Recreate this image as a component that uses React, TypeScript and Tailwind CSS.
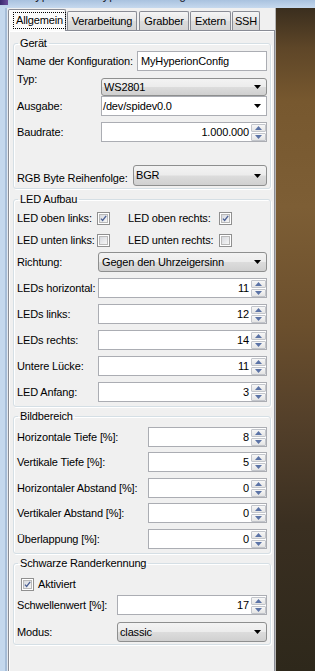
import React from "react";

function ComboArrow() {
  return (
    <svg width="7" height="4" viewBox="0 0 7 4" className="shrink-0">
      <polygon points="0,0 7,0 3.5,4" fill="#000" />
    </svg>
  );
}

function ReadCombo({ text, className }: { text: string; className: string }) {
  return (
    <div
      className={
        "flex items-center justify-between border border-[#8e8f8f] rounded-[3px] pr-[5px] bg-[linear-gradient(to_bottom,#f3f3f3_0%,#ececec_48%,#dcdcdc_52%,#d0d0d0_100%)] " +
        className
      }
    >
      <span className="whitespace-nowrap">{text}</span>
      <ComboArrow />
    </div>
  );
}

function EditCombo({ text, className }: { text: string; className: string }) {
  return (
    <div className={"flex items-center justify-between border border-[#abadb3] bg-white pr-[5px] " + className}>
      <span className="whitespace-nowrap">{text}</span>
      <ComboArrow />
    </div>
  );
}

function SpinBtn({ up }: { up: boolean }) {
  return (
    <div className="h-[8px] border border-[#c2c5cb] rounded-[1px] bg-[linear-gradient(to_bottom,#f7f7f7,#e4e4e4)] flex items-center justify-center">
      <svg width="7" height="4" viewBox="0 0 7 4">
        {up ? (
          <polygon points="3.5,0 7,4 0,4" fill="#5b73a6" />
        ) : (
          <polygon points="0,0 7,0 3.5,4" fill="#5b73a6" />
        )}
      </svg>
    </div>
  );
}

function Spin({ value, className }: { value: string; className: string }) {
  return (
    <div className={"flex h-[20px] border border-[#abadb3] bg-white " + className}>
      <span className="flex-1 flex items-center justify-end pr-[2px]">{value}</span>
      <div className="w-[15px] pt-[1px] flex flex-col gap-[1px]">
        <SpinBtn up={true} />
        <SpinBtn up={false} />
      </div>
    </div>
  );
}

function Check({ checked }: { checked: boolean }) {
  return (
    <div className="w-[13px] h-[13px] shrink-0 border border-[#8f8f8f] bg-white p-[1px]">
      <div className="w-full h-full border border-[#b9b9b9] bg-[linear-gradient(135deg,#d7d9de,#f6f6f6)] flex items-center justify-center">
        {checked ? (
          <svg width="9" height="9" viewBox="0 0 9 9">
            <path d="M1.2 4.6 L3.4 7 L7.9 1.2" stroke="#4a5f93" strokeWidth="1.7" fill="none" />
          </svg>
        ) : null}
      </div>
    </div>
  );
}

function Group({ title, className, children }: { title: string; className: string; children: React.ReactNode }) {
  return (
    <fieldset
      className={
        "ml-[4px] mr-[3px] border border-[#d5dfe5] rounded-[3px] px-[3px] shadow-[inset_1px_1px_0_#ffffff,1px_1px_0_#ffffff] " +
        className
      }
    >
      <legend className="ml-[1px] px-[2px] leading-[13px] whitespace-nowrap">{title}</legend>
      {children}
    </fieldset>
  );
}

function Tab({ label, className }: { label: string; className: string }) {
  return (
    <div
      className={
        "h-[19px] flex items-center justify-center border border-b-0 border-[#898c95] rounded-t-[2px] bg-[linear-gradient(to_bottom,#f5f5f5,#e6e6e6_50%,#dcdcdc_51%,#d4d4d4)] whitespace-nowrap " +
        className
      }
    >
      {label}
    </div>
  );
}

export default function App() {
  return (
    <div className="w-[315px] h-[671px] overflow-hidden flex flex-col bg-[#f0f0f0] font-['Liberation_Sans',Arial,sans-serif] text-[11px] leading-[13px] tracking-[-0.15px] text-black">
      {/* title bar (window caption, clipped at the top of the capture) */}
      <div className="h-[8px] shrink-0 flex overflow-hidden bg-[linear-gradient(to_bottom,#a9c2df,#c6d9ee)]">
        <div className="w-[8px] h-[5px] shrink-0 bg-[linear-gradient(to_right,#3a2a6e,#6a4b9a)]" />
        <div className="ml-[18px] -mt-[12px] text-[12px] leading-[14px] text-[#1e2430] whitespace-nowrap tracking-[0.5px]">
          Hypercon - Hyperion Konfiguration
        </div>
      </div>

      <div className="flex flex-1 min-h-0">
        {/* left window frame */}
        <div className="w-[8px] shrink-0 flex">
          <div className="w-[5px] bg-[#c4d8ee]" />
          <div className="w-[2px] bg-[#a6bdd8]" />
          <div className="w-[1px] bg-[#e2e8f0]" />
        </div>

        {/* main client area */}
        <div className="w-[267px] shrink-0 flex flex-col bg-[#f0f0f0]">
          {/* tab bar */}
          <div className="h-[22px] shrink-0 flex items-end relative z-10">
            <div className="h-[22px] -mb-[1px] w-[58px] flex items-center pl-[4px] border border-b-0 border-[#898c95] rounded-t-[2px] bg-[#fbfbfb] shadow-[inset_1px_1px_0_#ffffff]">
              <span className="h-[17px] flex items-center px-[2px] border border-dotted border-black whitespace-nowrap">
                Allgemein
              </span>
            </div>
            <Tab label="Verarbeitung" className="ml-[1px] w-[70px]" />
            <Tab label="Grabber" className="ml-[2px] w-[50px]" />
            <Tab label="Extern" className="ml-[1px] w-[41px]" />
            <Tab label="SSH" className="ml-[1px] w-[28px]" />
          </div>

          {/* pane */}
          <div className="flex-1 flex flex-col border border-b-0 border-[#898c95] bg-[#f0f0f0] shadow-[inset_1px_1px_0_#ffffff]">
            <Group title="Gerät" className="mt-[6px] pt-[1px] pb-[2px]">
              <div className="flex items-center h-[20px]">
                <span className="w-[120px] shrink-0 whitespace-nowrap">Name der Konfiguration:</span>
                <div className="w-[130px] h-[20px] flex items-center pl-[3px] border border-[#abadb3] bg-white whitespace-nowrap">
                  MyHyperionConfig
                </div>
              </div>
              <div className="flex mt-[2px]">
                <span className="w-[84px] shrink-0">Typ:</span>
                <ReadCombo text="WS2801" className="mt-[5px] w-[166px] h-[18px] pl-[2px]" />
              </div>
              <div className="flex items-center h-[20px]">
                <span className="w-[84px] shrink-0">Ausgabe:</span>
                <EditCombo text="/dev/spidev0.0" className="w-[166px] h-[20px] pl-[1px]" />
              </div>
              <div className="flex items-center h-[20px] mt-[6px]">
                <span className="w-[84px] shrink-0">Baudrate:</span>
                <Spin value="1.000.000" className="w-[166px]" />
              </div>
              <div className="flex items-center h-[21px] mt-[23px]">
                <span className="w-[116px] shrink-0 pt-[5px] whitespace-nowrap">RGB Byte Reihenfolge:</span>
                <ReadCombo text="BGR" className="w-[134px] h-[21px] pl-[2px]" />
              </div>
            </Group>

            <Group title="LED Aufbau" className="mt-[4px] pt-[6px] pb-[4px]">
              <div className="flex items-center h-[13px]">
                <span className="w-[80px] shrink-0 whitespace-nowrap">LED oben links:</span>
                <Check checked={true} />
                <span className="ml-[18px] w-[91px] shrink-0 whitespace-nowrap">LED oben rechts:</span>
                <Check checked={true} />
              </div>
              <div className="flex items-center h-[13px] mt-[9px]">
                <span className="w-[80px] shrink-0 whitespace-nowrap">LED unten links:</span>
                <Check checked={false} />
                <span className="ml-[18px] w-[91px] shrink-0 whitespace-nowrap">LED unten rechts:</span>
                <Check checked={false} />
              </div>
              <div className="flex items-center h-[20px] mt-[5px]">
                <span className="w-[81px] shrink-0">Richtung:</span>
                <ReadCombo text="Gegen den Uhrzeigersinn" className="w-[169px] h-[20px] pl-[3px]" />
              </div>
              <div className="flex items-center h-[20px] mt-[6px]">
                <span className="w-[81px] shrink-0 whitespace-nowrap">LEDs horizontal:</span>
                <Spin value="11" className="w-[169px]" />
              </div>
              <div className="flex items-center h-[20px] mt-[6px]">
                <span className="w-[81px] shrink-0">LEDs links:</span>
                <Spin value="12" className="w-[169px]" />
              </div>
              <div className="flex items-center h-[20px] mt-[6px]">
                <span className="w-[81px] shrink-0">LEDs rechts:</span>
                <Spin value="14" className="w-[169px]" />
              </div>
              <div className="flex items-center h-[20px] mt-[6px]">
                <span className="w-[81px] shrink-0">Untere Lücke:</span>
                <Spin value="11" className="w-[169px]" />
              </div>
              <div className="flex items-center h-[20px] mt-[6px]">
                <span className="w-[81px] shrink-0">LED Anfang:</span>
                <Spin value="3" className="w-[169px]" />
              </div>
            </Group>

            <Group title="Bildbereich" className="mt-[3px] pt-[4px] pb-[4px]">
              <div className="flex items-center h-[20px]">
                <span className="w-[131px] shrink-0 whitespace-nowrap">Horizontale Tiefe [%]:</span>
                <Spin value="8" className="w-[119px]" />
              </div>
              <div className="flex items-center h-[20px] mt-[5px]">
                <span className="w-[131px] shrink-0 whitespace-nowrap">Vertikale Tiefe [%]:</span>
                <Spin value="5" className="w-[119px]" />
              </div>
              <div className="flex items-center h-[20px] mt-[6px]">
                <span className="w-[131px] shrink-0 whitespace-nowrap">Horizontaler Abstand [%]:</span>
                <Spin value="0" className="w-[119px]" />
              </div>
              <div className="flex items-center h-[20px] mt-[5px]">
                <span className="w-[131px] shrink-0 whitespace-nowrap">Vertikaler Abstand [%]:</span>
                <Spin value="0" className="w-[119px]" />
              </div>
              <div className="flex items-center h-[20px] mt-[6px]">
                <span className="w-[131px] shrink-0 whitespace-nowrap">Überlappung [%]:</span>
                <Spin value="0" className="w-[119px]" />
              </div>
            </Group>

            <Group title="Schwarze Randerkennung" className="mt-[3px] pt-[8px] pb-[2px]">
              <div className="flex items-center h-[13px] pl-[4px]">
                <Check checked={true} />
                <span className="ml-[4px]">Aktiviert</span>
              </div>
              <div className="flex items-center h-[20px] mt-[4px]">
                <span className="w-[100px] shrink-0 whitespace-nowrap">Schwellenwert [%]:</span>
                <Spin value="17" className="w-[150px]" />
              </div>
              <div className="flex items-center h-[20px] mt-[7px]">
                <span className="w-[100px] shrink-0">Modus:</span>
                <ReadCombo text="classic" className="w-[150px] h-[20px] pl-[2px]" />
              </div>
            </Group>
          </div>
        </div>

        {/* desktop */}
        <div className="flex-1 border-l border-[#b4b4b4] bg-[linear-gradient(to_bottom,#3a2e1e_0%,#5e4628_6%,#77582f_14%,#7d5e35_30%,#6b4f2d_48%,#54402a_62%,#3a2f21_78%,#2e281b_100%)]" />
      </div>
    </div>
  );
}
